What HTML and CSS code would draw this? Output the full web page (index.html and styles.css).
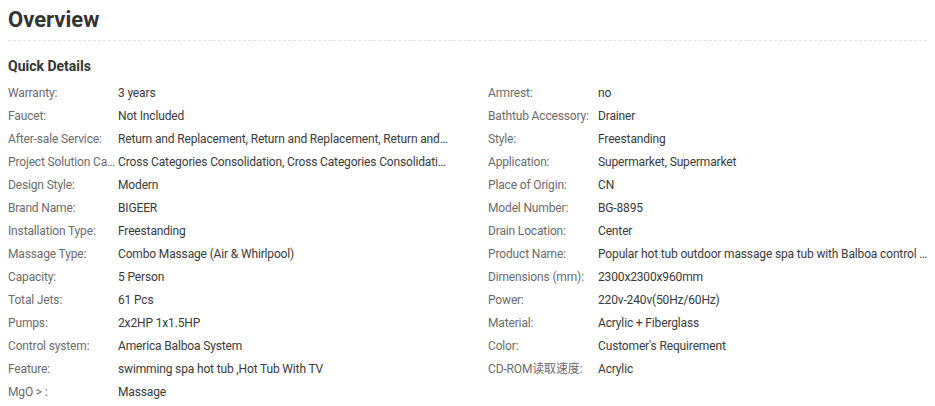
FILE: index.html
```html
<!DOCTYPE html>
<html lang="en">
<head>
<meta charset="utf-8">
<title>Overview</title>
<link rel="stylesheet" href="styles.css">
</head>
<body>
<div class="page">
  <h1 class="title">Overview</h1>
  <h2 class="subtitle">Quick Details</h2>
  <div class="details">
    <dl class="col">
      <div class="row"><dt>Warranty:</dt><dd>3 years</dd></div>
      <div class="row"><dt>Faucet:</dt><dd>Not Included</dd></div>
      <div class="row"><dt>After-sale Service:</dt><dd>Return and Replacement, Return and Replacement, Return and Replacement</dd></div>
      <div class="row"><dt>Project Solution Capability:</dt><dd>Cross Categories Consolidation, Cross Categories Consolidation</dd></div>
      <div class="row"><dt>Design Style:</dt><dd>Modern</dd></div>
      <div class="row"><dt>Brand Name:</dt><dd>BIGEER</dd></div>
      <div class="row"><dt>Installation Type:</dt><dd>Freestanding</dd></div>
      <div class="row"><dt>Massage Type:</dt><dd>Combo Massage (Air &amp; Whirlpool)</dd></div>
      <div class="row"><dt>Capacity:</dt><dd>5 Person</dd></div>
      <div class="row"><dt>Total Jets:</dt><dd>61 Pcs</dd></div>
      <div class="row"><dt>Pumps:</dt><dd>2x2HP 1x1.5HP</dd></div>
      <div class="row"><dt>Control system:</dt><dd>America Balboa System</dd></div>
      <div class="row"><dt>Feature:</dt><dd>swimming spa hot tub ,Hot Tub With TV</dd></div>
      <div class="row"><dt>MgO &gt; :</dt><dd>Massage</dd></div>
    </dl>
    <dl class="col">
      <div class="row"><dt>Armrest:</dt><dd>no</dd></div>
      <div class="row"><dt>Bathtub Accessory:</dt><dd>Drainer</dd></div>
      <div class="row"><dt>Style:</dt><dd>Freestanding</dd></div>
      <div class="row"><dt>Application:</dt><dd>Supermarket, Supermarket</dd></div>
      <div class="row"><dt>Place of Origin:</dt><dd>CN</dd></div>
      <div class="row"><dt>Model Number:</dt><dd>BG-8895</dd></div>
      <div class="row"><dt>Drain Location:</dt><dd>Center</dd></div>
      <div class="row"><dt>Product Name:</dt><dd>Popular hot tub outdoor massage spa tub with Balboa control system</dd></div>
      <div class="row"><dt>Dimensions (mm):</dt><dd>2300x2300x960mm</dd></div>
      <div class="row"><dt>Power:</dt><dd>220v-240v(50Hz/60Hz)</dd></div>
      <div class="row"><dt>Material:</dt><dd>Acrylic + Fiberglass</dd></div>
      <div class="row"><dt>Color:</dt><dd>Customer's Requirement</dd></div>
      <div class="row"><dt>CD-ROM读取速度:</dt><dd>Acrylic</dd></div>
    </dl>
  </div>
</div>
</body>
</html>
```
FILE: styles.css
```css
* { box-sizing: border-box; }
html, body { margin: 0; padding: 0; background: #fff; }
body {
  font-family: Roboto, "Noto Sans CJK SC", "Liberation Sans", sans-serif;
  color: #333;
}
.page { padding: 0 8px; }
.title {
  margin: 5px 0 0;
  padding-bottom: 5px;
  font-size: 22px;
  line-height: 30px;
  font-weight: 700;
  color: #333;
  border-bottom: 1px dashed #e2e2e2;
}
.subtitle {
  margin: 15px 0 5px;
  font-size: 14px;
  line-height: 20px;
  font-weight: 700;
  color: #333;
}
.details {
  display: flex;
  gap: 40px;
}
.col {
  margin: 0;
  width: 440px;
  display: flex;
  flex-direction: column;
}
.row {
  display: flex;
  height: 23px;
  align-items: center;
  font-size: 12px;
  line-height: 16px;
  letter-spacing: -0.15px;
}
.row dt {
  width: 110px;
  flex: none;
  color: #6b6b6b;
  white-space: nowrap;
  overflow: hidden;
  text-overflow: ellipsis;
}
.row dd {
  margin: 0;
  width: 330px;
  color: #3a3a3a;
  white-space: nowrap;
  overflow: hidden;
  text-overflow: ellipsis;
}
```
